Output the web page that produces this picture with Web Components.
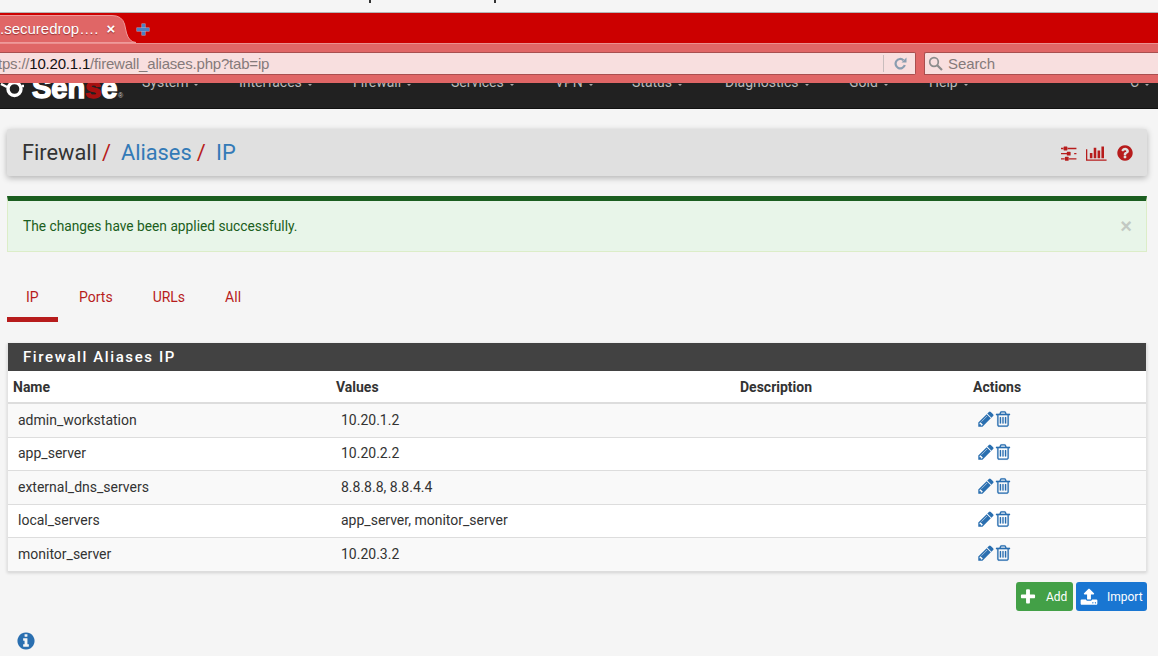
<!DOCTYPE html>
<html><head><meta charset="utf-8"><title>Firewall Aliases IP</title>
<style>
html,body{margin:0;padding:0;background:#f5f5f5;height:656px;overflow:hidden;font-family:Roboto,"Liberation Sans",sans-serif;}
</style></head><body>
<browser-chrome></browser-chrome>
<top-nav></top-nav>
<page-main>
  <bread-crumb></bread-crumb>
  <ok-alert>The changes have been applied successfully.</ok-alert>
  <tab-strip></tab-strip>
  <alias-panel heading="Firewall Aliases IP">
    <alias-row name="admin_workstation" values="10.20.1.2" odd></alias-row>
    <alias-row name="app_server" values="10.20.2.2"></alias-row>
    <alias-row name="external_dns_servers" values="8.8.8.8, 8.8.4.4" odd></alias-row>
    <alias-row name="local_servers" values="app_server, monitor_server"></alias-row>
    <alias-row name="monitor_server" values="10.20.3.2" odd></alias-row>
  </alias-panel>
  <action-bar>
    <action-btn icon="plus" color="#43a047" pad="3" style="width:57px">Add</action-btn>
    <action-btn icon="upload" color="#1976d2" pad="4" style="width:71px">Import</action-btn>
  </action-bar>
  <fa-icon name="info" size="20" style="color:#2a6fb0;margin:20px 0 0 9px"></fa-icon>
</page-main>
<script>
const ICONS={
pencil:['0 0 1792 1792','M491 1536l91-91-235-235-91 91v107h128v128h107zm523-928q0-22-22-22-10 0-17 7l-542 542q-7 7-7 17 0 22 22 22 10 0 17-7l542-542q7-7 7-17zm-54-192l416 416-832 832h-416v-416zm683 96q0 53-37 90l-166 166-416-416 166-165q36-38 90-38 53 0 91 38l235 234q37 39 37 91z'],
trash:['0 0 1792 1792','M704 736v576q0 14-9 23t-23 9h-64q-14 0-23-9t-9-23v-576q0-14 9-23t23-9h64q14 0 23 9t9 23zm256 0v576q0 14-9 23t-23 9h-64q-14 0-23-9t-9-23v-576q0-14 9-23t23-9h64q14 0 23 9t9 23zm256 0v576q0 14-9 23t-23 9h-64q-14 0-23-9t-9-23v-576q0-14 9-23t23-9h64q14 0 23 9t9 23zm128 724v-948h-896v948q0 22 7 40.5t14.5 27 10.5 8.5h832q3 0 10.5-8.5t14.5-27 7-40.5zm-672-1076h448l-48-117q-7-9-17-11h-317q-10 2-17 11zm928 32v64q0 14-9 23t-23 9h-96v948q0 83-47 143.5t-113 60.5h-832q-66 0-113-58.5t-47-141.5v-952h-96q-14 0-23-9t-9-23v-64q0-14 9-23t23-9h309l70-167q15-37 54-63t79-26h320q40 0 79 26t54 63l70 167h309q14 0 23 9t9 23z'],
question:['0 0 1792 1792','M1024 1376v-192q0-14-9-23t-23-9h-192q-14 0-23 9t-9 23v192q0 14 9 23t23 9h192q14 0 23-9t9-23zm256-672q0-88-55.5-163t-138.5-116-170-41q-243 0-371 213-15 24 8 42l132 100q7 6 19 6 16 0 25-12 53-68 86-92 34-24 86-24 48 0 85.5 26t37.5 59q0 38-20 61t-68 45q-63 28-115.5 86.5t-52.5 125.5v36q0 14 9 23t23 9h192q14 0 23-9t9-23q0-19 21.5-49.5t54.5-49.5q32-18 49-28.5t46-35 44.5-48 28-60.5 12.5-81zm384 192q0 209-103 385.5t-279.5 279.5-385.5 103-385.5-103-279.5-279.5-103-385.5 103-385.5 279.5-279.5 385.5-103 385.5 103 279.5 279.5 103 385.5z'],
info:['0 0 1792 1792','M1152 1376v-160q0-14-9-23t-23-9h-96v-512q0-14-9-23t-23-9h-320q-14 0-23 9t-9 23v160q0 14 9 23t23 9h96v320h-96q-14 0-23 9t-9 23v160q0 14 9 23t23 9h448q14 0 23-9t9-23zm-128-896v-160q0-14-9-23t-23-9h-192q-14 0-23 9t-9 23v160q0 14 9 23t23 9h192q14 0 23-9t9-23zm640 416q0 209-103 385.5t-279.5 279.5-385.5 103-385.5-103-279.5-279.5-103-385.5 103-385.5 279.5-279.5 385.5-103 385.5 103 279.5 279.5 103 385.5z'],
plus:['0 0 1792 1792','M1600 736v192q0 40-28 68t-68 28h-416v416q0 40-28 68t-68 28h-192q-40 0-68-28t-28-68v-416h-416q-40 0-68-28t-28-68v-192q0-40 28-68t68-28h416v-416q0-40 28-68t68-28h192q40 0 68 28t28 68v416h416q40 0 68 28t28 68z'],
upload:['0 0 1792 1792','M1344 1472q0-26-19-45t-45-19-45 19-19 45 19 45 45 19 45-19 19-45zm256 0q0-26-19-45t-45-19-45 19-19 45 19 45 45 19 45-19 19-45zm128-224v320q0 40-28 68t-68 28h-1472q-40 0-68-28t-28-68v-320q0-40 28-68t68-28h427q21 56 70.5 92t110.5 36h256q61 0 110.5-36t70.5-92h427q40 0 68 28t28 68zm-325-648q-17 40-59 40h-256v448q0 26-19 45t-45 19h-256q-26 0-45-19t-19-45v-448h-256q-42 0-59-40-17-39 14-69l448-448q18-19 45-19t45 19l448 448q31 30 14 69z'],
sliders:['0 0 1792 1792','M352 1408v128h-352v-128h352zm352-128q26 0 45 19t19 45v256q0 26-19 45t-45 19h-256q-26 0-45-19t-19-45v-256q0-26 19-45t45-19h256zm160-384v128h-864v-128h864zm-640-512v128h-224v-128h224zm1312 1024v128h-736v-128h736zm-960-1152q26 0 45 19t19 45v256q0 26-19 45t-45 19h-256q-26 0-45-19t-19-45v-256q0-26 19-45t45-19h256zm320 512q26 0 45 19t19 45v256q0 26-19 45t-45 19h-256q-26 0-45-19t-19-45v-256q0-26 19-45t45-19h256zm640 128v128h-224v-128h224zm0-512v128h-864v-128h864z'],
chart:['0 0 2048 1792','M640 896v512h-256v-512h256zm384-512v1024h-256v-1024h256zm1024 1152v128h-2048v-1152h128v1024h1920zm-640-896v768h-256v-768h256zm384-384v1152h-256v-1152h256z']
};
function def(tag,html){
  customElements.define(tag,class extends HTMLElement{
    constructor(){super();this.attachShadow({mode:'open'});}
    connectedCallback(){this.shadowRoot.innerHTML=typeof html==='function'?html(this):html;}
  });
}
def('fa-icon',el=>{
  const [vb,d]=ICONS[el.getAttribute('name')];const s=+el.getAttribute('size')||14;
  const [,,w,h]=vb.split(' ').map(Number);
  return `<style>:host{display:inline-flex;line-height:0}svg{display:block;fill:currentColor}path{stroke:currentColor;stroke-width:${el.getAttribute('bold')||0}}</style>
  <svg width="${s*w/h}" height="${s}" viewBox="${vb}"><path d="${d}"/></svg>`;
});
def('browser-chrome',`<style>
:host{display:block;height:83px;font-family:"Liberation Sans",Arial,sans-serif;overflow:hidden}
.top{height:12px;background:#f5f5f5;border-bottom:1px solid #b5b5b5;display:flex}
.top i{display:block;width:1.5px;height:3px;background:#333;margin-left:369px}
.top i+i{margin-left:123.500px}
.tabs{height:30px;background:#c00;display:flex;align-items:flex-end}
.tab{position:relative;width:136px;height:28px;box-sizing:border-box;color:#fff;font-size:15px;display:flex;align-items:center;padding-bottom:2px;text-shadow:0 1px 1px rgba(80,0,0,.5)}
.tab svg{position:absolute;left:0;top:0}
.tab span{position:relative;white-space:nowrap}
.tab b{position:relative;margin-left:8px;font-size:15px;font-weight:700}
.new{margin-left:1px;margin-bottom:8px;width:12px;height:11px;position:relative}
.new::before,.new::after{content:"";position:absolute;background:#4a80c4;box-shadow:0 0 0 .5px #9db9dc}
.new::before{left:4.500px;top:0;width:3px;height:11px}
.new::after{left:0;top:4px;width:12px;height:3px}
.bar{height:40px;box-sizing:border-box;background:#e06666;border-top:1px solid #ec8f8f;display:flex;gap:8px;padding-top:8px}
.field{height:23px;box-sizing:border-box;background:#f8dfdf;border:1px solid #a94f4f;display:flex;align-items:center;font-size:15px;color:#857a7a;white-space:nowrap}
.url{width:916px;border-left:0;border-radius:0 2px 2px 0;flex:none}
.url>span:first-child{letter-spacing:-.2px;margin-left:-2px}
.url em{font-style:normal;color:#111}
.url .sep{margin-left:auto;width:1px;height:17px;background:#c9bdbd}
.url svg{margin:0 8px 0 10px}
.search{flex:1;border-right:0;border-radius:2px 0 0 0;padding-left:3px;letter-spacing:-.1px}
.search svg{margin-right:5px}
</style>
<div class="top"><i></i><i></i></div>
<div class="tabs"><div class="tab"><svg width="136" height="28" viewBox="0 0 136 28"><path d="M-2 .5H112Q122 .5 124.500 9L126.500 18Q129 27 136 27.500H-2Z" fill="#e06666" stroke="#ee9a9a"/></svg><span>.securedrop….</span><b>×</b></div><div class="new"></div></div>
<div class="bar"><div class="field url"><span>tps://<em>10.20.1.1</em>/firewall_aliases.php?tab=ip</span><span class="sep"></span>
<svg width="13" height="13" viewBox="0 0 13 13"><path d="M10.800 8A4.700 4.700 0 1 1 9.500 3.200" fill="none" stroke="#8a9db0" stroke-width="2.200"/><path d="M7.500 5.500H12.500V.5Z" fill="#8a9db0"/></svg></div>
<div class="field search"><svg width="15" height="15" viewBox="0 0 15 15"><circle cx="6" cy="6" r="4.300" fill="none" stroke="#8c8c8c" stroke-width="1.700"/><path d="M9.200 9.200L14 14" stroke="#8c8c8c" stroke-width="2.200"/></svg><span>Search</span></div></div>`);
def('top-nav',`<style>
:host{display:block;height:25px;background:#212121;overflow:hidden;border-bottom:1px solid #111}
.in{display:flex;margin-top:-8px;height:33px;position:relative}
.logo{width:142px;flex:none;color:#fff;position:relative}
.logo svg{position:absolute;left:0;top:8px}
.logo .t{position:absolute;left:32px;top:-2px;font:700 29px/30px "Liberation Sans",Arial,sans-serif;-webkit-text-stroke:1.400px #fff;white-space:nowrap}
.logo .t u{text-decoration:none;color:#a71010;-webkit-text-stroke:1.400px #a71010}
.logo .r{position:absolute;left:118px;top:17px;font:7px "Liberation Sans",sans-serif;color:#ccc}
a{position:absolute;top:-3px;font:14px/20px Roboto,sans-serif;color:#b9b9b9;white-space:nowrap}
a::after{content:"";display:inline-block;margin-left:6px;vertical-align:1px;border:2px solid transparent;border-top-color:#aaa;border-bottom:0}
</style><div class="in"><div class="logo"><svg width="24" height="18" viewBox="0 0 24 18"><circle cx="14.500" cy="6" r="6.500" fill="none" stroke="#fff" stroke-width="3.400"/><path d="M1 1l6 3M22 3h2" stroke="#fff" stroke-width="2.500"/></svg><span class="t">Sen<u>s</u>e</span><span class="r">®</span></div>
<a style="left:142px">System</a><a style="left:239px">Interfaces</a><a style="left:353px">Firewall</a><a style="left:451px">Services</a><a style="left:555px">VPN</a><a style="left:632px">Status</a><a style="left:725px">Diagnostics</a><a style="left:849px">Gold</a><a style="left:929px">Help</a><a style="left:1130px">C</a></div>`);
def('page-main',`<style>:host{display:flex;flex-direction:column;align-items:flex-start;padding:20px 11px 0 7px}::slotted(*){flex:none}</style><slot></slot>`);
def('bread-crumb',`<style>
:host{display:flex;align-self:stretch;align-items:center;height:47px;background:#e0e0e0;box-shadow:0 2px 6px rgba(0,0,0,.28);padding:0 13px 0 15px;font:21.800px/24px Roboto,sans-serif;color:#333;border-radius:2px}
.l{color:#337ab7}.s{color:#b71c1c;margin:0 10px 0 5px}
.s.a{margin:0 5px 0 5px}
.i{margin-left:auto;display:flex;align-items:center;color:#b71c1c}
</style><span>Firewall</span><span class="s">/</span><span class="l">Aliases</span><span class="s a">/</span><span class="l">&nbsp;IP</span>
<div class="i"><fa-icon name="sliders" size="18"></fa-icon><fa-icon name="chart" size="18" style="margin:0 9px 0 7px"></fa-icon><fa-icon name="question" size="18"></fa-icon></div>`);
def('ok-alert',`<style>
:host{display:flex;align-self:stretch;box-sizing:border-box;height:56px;margin-top:20px;background:#e8f5e9;border:1px solid #dcedc8;border-top:5px solid #1b5e20;padding:0 15px;align-items:center;color:#1b5e20;font:13.750px/20px Roboto,sans-serif}
b{margin-left:auto;font:700 20px/20px "Liberation Sans",sans-serif;color:#c2c9c3;margin-right:-1px}
</style><span><slot></slot></span><b>×</b>`);
def('tab-strip',`<style>
:host{display:flex;height:50px;margin-top:20px;font:14px/20px Roboto,sans-serif;color:#b71c1c}
span{display:flex;align-items:center;box-sizing:border-box;padding:0 20px;height:50px}
.a{border-bottom:5px solid #b71c1c;padding:5px 0 0 19px;width:51px}
</style><span class="a">IP</span><span style="padding-left:21px">Ports</span><span>URLs</span><span style="padding-left:20px">All</span>`);
def('alias-panel',el=>`<style>
:host{display:block;align-self:stretch;margin-top:21px;background:#fff;border:1px solid #e3e3e3;border-top:0;box-shadow:0 1px 3px rgba(0,0,0,.15);font:14px/20px Roboto,sans-serif;color:#333;height:229px;box-sizing:border-box}
h2{margin:0;height:28px;background:#424242;color:#fff;font:500 15px/28px Roboto,sans-serif;letter-spacing:1.600px;padding-left:15px}
.h{display:grid;grid-template-columns:323px 404px 233px 1fr;height:33px;box-sizing:border-box;border-bottom:2px solid #ddd;font-weight:700;font-size:14px;align-items:center;padding-top:1px}
.h span{padding-left:5px}
</style><h2>${el.getAttribute('heading')}</h2><div class="h"><span>Name</span><span>Values</span><span>Description</span><span>Actions</span></div><slot></slot>`);
def('alias-row',el=>`<style>
:host{display:grid;grid-template-columns:323px 404px 233px 1fr;height:33.500px;box-sizing:border-box;align-items:center;border-bottom:1px solid #ddd;background:${el.hasAttribute('odd')?'#f9f9f9':'#fff'};font-size:14px}
span{padding:0 0 .6px 10px;white-space:nowrap}
.a{display:flex;padding-left:9px;color:#2a6fb0;margin-top:-3px;align-items:center}
</style><span>${el.getAttribute('name')}</span><span>${el.getAttribute('values')}</span><span></span><div class="a"><fa-icon name="pencil" size="18"></fa-icon><fa-icon name="trash" size="18" bold="15" style="margin-left:-1px"></fa-icon></div>`);
def('action-bar',`<style>:host{display:flex;align-self:stretch;justify-content:flex-end;gap:3px;margin-top:10px}</style><slot></slot>`);
def('action-btn',el=>`<style>
:host{display:flex;align-items:center;box-sizing:border-box;height:29px;background:${el.getAttribute('color')};color:#fff;border-radius:3px;padding-left:${el.getAttribute('pad')}px;font:12px/16px Roboto,sans-serif}
fa-icon{flex:none}
span{margin-left:9px;white-space:nowrap}
</style><fa-icon name="${el.getAttribute('icon')}" size="18"></fa-icon><span><slot></slot></span>`);
</script>
</body></html>
